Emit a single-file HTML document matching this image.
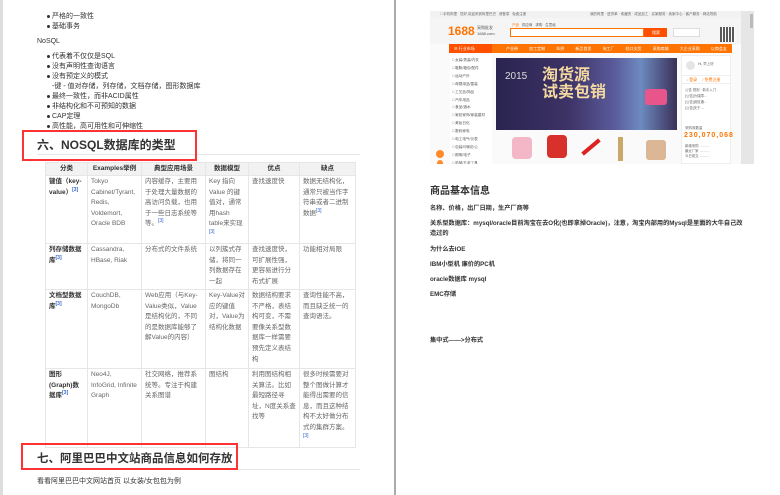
<!DOCTYPE html>
<html><head><meta charset="utf-8"><style>
*{margin:0;padding:0;box-sizing:border-box}
body{width:780px;height:495px;background:#fff;position:relative;overflow:hidden;font-family:"Liberation Sans","Noto Sans CJK SC",sans-serif;color:#333}
.a{position:absolute;white-space:nowrap}
.t{font-size:7px;line-height:10px;color:#333}
.b{position:absolute;left:47px;width:3px;height:3px;border-radius:50%;background:#333}
table{position:absolute;left:45px;top:162px;border-collapse:collapse;table-layout:fixed;font-size:6.5px;line-height:10.6px;color:#666}
td,th{border:1px solid #e6e6e6;vertical-align:top;padding:1px 3px;text-align:left;overflow:hidden}
th{background:#f2f2f2;color:#333;text-align:center;font-weight:bold;height:13px;padding:1px 3px;line-height:10px}
td:first-child{color:#333;font-weight:bold}
sup{color:#36c;font-size:5px;line-height:0}
.h{font-weight:bold;color:#333}
.rb{position:absolute;border:2.5px solid #f33}
.r{position:absolute;font-size:6.2px;line-height:10px;font-weight:bold;color:#333;white-space:nowrap}
.o{background:#ff7300}
</style></head><body>
<div class="a" style="left:0;top:0;width:3px;height:495px;background:#ddd"></div>
<div class="a" style="left:394px;top:0;width:2px;height:495px;background:#aaa"></div>

<div class="b" style="top:15px"></div><div class="a t" style="left:52px;top:12px">严格的一致性</div>
<div class="b" style="top:25px"></div><div class="a t" style="left:52px;top:22px">基础事务</div>
<div class="a t" style="left:37px;top:37px">NoSQL</div>
<div class="b" style="top:55px"></div><div class="a t" style="left:52px;top:52px">代表着不仅仅是SQL</div>
<div class="b" style="top:65px"></div><div class="a t" style="left:52px;top:62px">没有声明性查询语言</div>
<div class="b" style="top:75px"></div><div class="a t" style="left:52px;top:72px">没有预定义的模式</div>
<div class="a t" style="left:52px;top:82px">-键 - 值对存储，列存储，文档存储，图形数据库</div>
<div class="b" style="top:95px"></div><div class="a t" style="left:52px;top:92px">最终一致性，而非ACID属性</div>
<div class="b" style="top:105px"></div><div class="a t" style="left:52px;top:102px">非结构化和不可预知的数据</div>
<div class="b" style="top:115px"></div><div class="a t" style="left:52px;top:112px">CAP定理</div>
<div class="b" style="top:125px"></div><div class="a t" style="left:52px;top:122px">高性能，高可用性和可伸缩性</div>

<div class="a" style="left:37px;top:154px;width:323px;height:1px;background:#e6e6e6"></div>
<div class="a h" style="left:37px;top:137px;font-size:12px;line-height:16px">六、NOSQL数据库的类型</div>
<div class="rb" style="left:22px;top:130px;width:175px;height:31px"></div>

<table>
<colgroup><col style="width:42px"><col style="width:54px"><col style="width:64px"><col style="width:43px"><col style="width:51px"><col style="width:56px"></colgroup>
<tr><th>分类</th><th>Examples举例</th><th>典型应用场景</th><th>数据模型</th><th>优点</th><th>缺点</th></tr>
<tr style="height:68px"><td>键值（key-value）<sup>[3]</sup></td><td>Tokyo Cabinet/Tyrant, Redis, Voldemort, Oracle BDB</td><td>内容缓存，主要用于处理大量数据的高访问负载，也用于一些日志系统等等。<sup>[3]</sup></td><td>Key 指向 Value 的键值对，通常用hash table来实现<sup>[3]</sup></td><td>查找速度快</td><td>数据无结构化，通常只被当作字符串或者二进制数据<sup>[3]</sup></td></tr>
<tr style="height:46px"><td>列存储数据库<sup>[3]</sup></td><td>Cassandra, HBase, Riak</td><td>分布式的文件系统</td><td>以列簇式存储，将同一列数据存在一起</td><td>查找速度快，可扩展性强，更容易进行分布式扩展</td><td>功能相对局限</td></tr>
<tr style="height:79px"><td>文档型数据库<sup>[3]</sup></td><td>CouchDB, MongoDb</td><td>Web应用（与Key-Value类似，Value是结构化的，不同的是数据库能够了解Value的内容）</td><td>Key-Value对应的键值对，Value为结构化数据</td><td>数据结构要求不严格，表结构可变，不需要像关系型数据库一样需要预先定义表结构</td><td>查询性能不高，而且缺乏统一的查询语法。</td></tr>
<tr style="height:79px"><td>图形(Graph)数据库<sup>[3]</sup></td><td>Neo4J, InfoGrid, Infinite Graph</td><td>社交网络，推荐系统等。专注于构建关系图谱</td><td>图结构</td><td>利用图结构相关算法。比如最短路径寻址，N度关系查找等</td><td>很多时候需要对整个图做计算才能得出需要的信息，而且这种结构不太好做分布式的集群方案。<sup>[3]</sup></td></tr>
</table>

<div class="a" style="left:37px;top:469px;width:323px;height:1px;background:#e6e6e6"></div>
<div class="a h" style="left:37px;top:451px;font-size:11.5px;line-height:16px;background:#fff">七、阿里巴巴中文站商品信息如何存放</div>
<div class="rb" style="left:21px;top:443px;width:217px;height:27px"></div>
<div class="a t" style="left:37px;top:477px">看看阿里巴巴中文网站首页 以女装/女包包为例</div>

<!-- 1688 screenshot -->
<div class="a" style="left:430px;top:11px;width:324px;height:153px;background:#fafafa;overflow:hidden">
 <div class="a" style="left:0;top:0;width:311px;height:7px;background:#f2f2f2"></div>
 <div class="a" style="left:10px;top:1px;font-size:3.5px;color:#666">□ 手机阿里 &nbsp; 您好,欢迎来到阿里巴巴 &nbsp; 请登录 &nbsp; 免费注册</div>
 <div class="a" style="left:160px;top:1px;font-size:3.5px;color:#666">我的阿里 · 进货单 · 收藏夹 · 成品加工 · 买家服务 · 卖家中心 · 客户服务 · 网站导航</div>
 <div class="a" style="left:0;top:7px;width:311px;height:26px;background:#f5f5f5"></div>
 <div class="a" style="left:18px;top:13px;font-size:12px;font-weight:bold;color:#ff7300;line-height:14px">1688</div>
 <div class="a" style="left:47px;top:14px;font-size:4px;color:#555">采购批发<br>1688.com</div>
 <div class="a" style="left:82px;top:12px;font-size:3.5px;color:#ff7300">产品 &nbsp; <span style="color:#555">供应商 &nbsp; 求购 &nbsp; 生意经</span></div>
 <div class="a" style="left:80px;top:17px;width:134px;height:9px;background:#fff;border:1px solid #ff7300"></div>
 <div class="a o" style="left:214px;top:17px;width:23px;height:9px;background:#ff5000"></div>
 <div class="a" style="left:222px;top:19px;font-size:4px;color:#fff">搜索</div>
 <div class="a" style="left:243px;top:17px;width:27px;height:9px;background:#fff;border:1px solid #ddd"></div>
 <div class="a" style="left:290px;top:16px;width:15px;height:15px;background:repeating-linear-gradient(90deg,#333 0 2px,#fff 2px 3px),#333;opacity:.8"></div>
 <div class="a" style="left:19px;top:33px;width:43px;height:9px;background:#ff5000"></div>
 <div class="a o" style="left:62px;top:33px;width:240px;height:9px"></div>
 <div class="a" style="left:24px;top:35px;font-size:4px;color:#fff">☰ 行业市场</div>
 <div class="a" style="left:76px;top:35px;font-size:4px;color:#fff;word-spacing:10px">产业带 加工定制 伙拼 新品首发 淘工厂 档口尖货 采购商城 大企业采购 以商会友 生意经</div>
 <div class="a" style="left:20px;top:44px;width:42px;height:109px;background:#fff"></div>
 <div class="a" style="left:22px;top:46px;font-size:3.6px;line-height:7.9px;color:#555">□ 女装/男装/内衣<br>□ 鞋靴/箱包/配件<br>□ 运动户外<br>□ 母婴用品/童装<br>□ 工艺品/饰品<br>□ 汽车用品<br>□ 食品/酒水<br>□ 家纺家饰/家装建材<br>□ 美妆日化<br>□ 数码家电<br>□ 电工电气/仪表<br>□ 包装/印刷办公<br>□ 照明/电子<br>□ 机械/五金工具</div>
 <div class="a" style="left:66px;top:47px;width:181px;height:72px;background:linear-gradient(90deg,#2a2450,#3d3366 40%,#5a5a9a 65%,#6d8ac0 80%,#3a3058)"></div>
 <div class="a" style="left:75px;top:60px;font-size:10px;color:#ddd">2015</div>
 <div class="a" style="left:112px;top:56px;font-size:16px;font-weight:bold;color:#f4d9a0;line-height:17px">淘货源<br>试卖包销</div>
 <div class="a" style="left:215px;top:78px;width:22px;height:16px;background:#e8558a;border-radius:3px"></div>
 <div class="a" style="left:251px;top:44px;width:50px;height:109px;background:#fff;border:1px solid #eee"></div>
 <div class="a" style="left:256px;top:50px;width:9px;height:9px;border-radius:50%;background:#e5e5e5"></div>
 <div class="a" style="left:268px;top:51px;font-size:3.5px;color:#666">Hi, 早上好</div>
 <div class="a" style="left:252px;top:64px;width:48px;height:9px;border-top:1px solid #eee;border-bottom:1px solid #eee"></div>
 <div class="a" style="left:256px;top:66px;font-size:4px;color:#ff7300">↓ 登录 &nbsp; &nbsp; ⁄ 免费注册</div>
 <div class="a" style="left:255px;top:76px;font-size:3.4px;line-height:6px;color:#666">公告 规则 · 新手入门<br>[公告]为保障…<br>[公告]诚信通…<br>[公告]关于…</div>
 <div class="a" style="left:255px;top:115px;font-size:3.5px;color:#666">采购商数量</div>
 <div class="a" style="left:254px;top:121px;font-size:7px;font-weight:bold;color:#ff7300;letter-spacing:1px">230,070,068</div>
 <div class="a" style="left:255px;top:133px;font-size:3.4px;line-height:5px;color:#666">新增采购 ………<br>最近厂家 ………<br>今日成交 ………</div>
 <div class="a" style="left:82px;top:126px;width:20px;height:22px;background:#f3b7c8;border-radius:4px"></div>
 <div class="a" style="left:117px;top:124px;width:20px;height:23px;background:#d8302a;border-radius:4px"></div>
 <div class="a" style="left:150px;top:134px;width:22px;height:4px;background:#d22;transform:rotate(-40deg)"></div>
 <div class="a" style="left:188px;top:126px;width:5px;height:24px;background:#c9a86a"></div>
 <div class="a" style="left:216px;top:129px;width:20px;height:20px;background:#dcb795;border-radius:3px"></div>
 <div class="a" style="left:311px;top:0;width:13px;height:153px;background:#e6e6e6"></div>
 <div class="a" style="left:320px;top:3px;width:3px;height:14px;background:#bbb"></div>
 <div class="a" style="left:6px;top:139px;width:8px;height:8px;border-radius:50%;background:#ff8a2a"></div>
 <div class="a" style="left:7px;top:149px;width:6px;height:6px;border-radius:50%;background:#ff8a2a"></div>
</div>

<div class="a h" style="left:430px;top:185px;font-size:10px;line-height:13px">商品基本信息</div>
<div class="r" style="left:430px;top:204px">名称、价格，出厂日期，生产厂商等</div>
<div class="r" style="left:430px;top:219px">关系型数据库：mysql/oracle目前淘宝在去O化(也即拿掉Oracle)，注意，淘宝内部用的Mysql是里面的大牛自己改</div>
<div class="r" style="left:430px;top:229px">造过的</div>
<div class="r" style="left:430px;top:245px">为什么去IOE</div>
<div class="r" style="left:430px;top:260px">IBM小型机 廉价的PC机</div>
<div class="r" style="left:430px;top:275px">oracle数据库 mysql</div>
<div class="r" style="left:430px;top:290px">EMC存储</div>
<div class="r" style="left:430px;top:336px">集中式——&gt;分布式</div>
</body></html>
